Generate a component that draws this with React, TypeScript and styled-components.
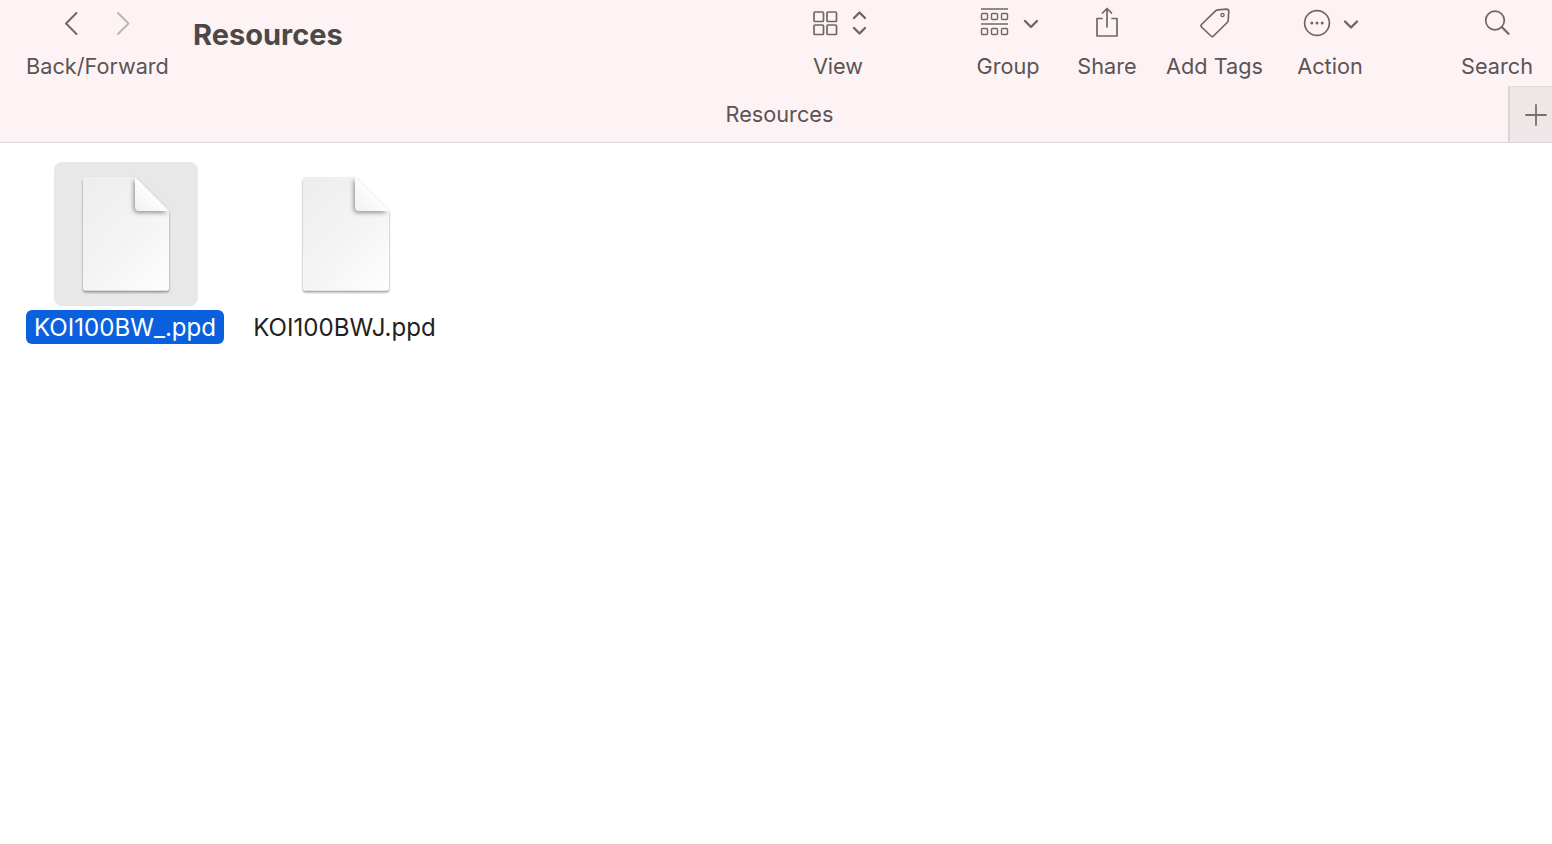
import React from 'react';
import styled, { createGlobalStyle } from 'styled-components';

const GlobalStyle = createGlobalStyle`
  html, body {
    margin: 0;
    padding: 0;
    background: #fff;
    font-family: Inter, "Liberation Sans", sans-serif;
  }
`;

const Page = styled.div`
  width: 1552px;
  height: 844px;
  overflow: hidden;
  display: flex;
  flex-direction: column;
`;

const Header = styled.header`
  height: 142px;
  background: #fdf3f4;
  border-bottom: 1px solid #dad8d8;
  display: flex;
  flex-direction: column;
`;

const Toolbar = styled.div`
  height: 86px;
  display: flex;
  align-items: flex-start;
  padding: 0 19px 0 26px;
`;

const ToolItem = styled.div<{ $width: number; $gap?: number }>`
  width: ${(p) => p.$width}px;
  margin-left: ${(p) => p.$gap ?? 0}px;
  display: flex;
  flex-direction: column;
  align-items: center;
  flex: none;
`;

const IconRow = styled.div`
  height: 46px;
  display: flex;
  align-items: center;
  justify-content: center;
  color: #6f6767;
`;

const ToolLabel = styled.span`
  font-size: 21.7px;
  line-height: 40px;
  color: #5b5454;
  white-space: nowrap;
`;

const Title = styled.h1`
  margin: 13px 0 0 24px;
  font-size: 29px;
  line-height: 44px;
  font-weight: 700;
  color: #4d4848;
  flex: 1;
`;

const TabBar = styled.div`
  flex: 1;
  display: flex;
`;

const TabTitle = styled.div`
  flex: 1;
  padding-left: 51px;
  display: flex;
  align-items: center;
  justify-content: center;
  font-size: 21.7px;
  color: #5b5454;
`;

const AddTab = styled.div`
  width: 44px;
  padding-left: 9px;
  box-sizing: border-box;
  background: #efe7e7;
  border-left: 2px solid #dcd6d6;
  border-top: 1px solid #e2dcdc;
  display: flex;
  align-items: center;
  justify-content: center;
  color: #767070;
`;

const Files = styled.main`
  display: flex;
  align-items: flex-start;
  padding: 19px 0 0 26px;
`;

const FileCell = styled.div<{ $width: number; $gap?: number }>`
  width: ${(p) => p.$width}px;
  margin-left: ${(p) => p.$gap ?? 0}px;
  display: flex;
  flex-direction: column;
  align-items: center;
`;

const Tile = styled.div<{ $selected?: boolean }>`
  width: 144px;
  height: 144px;
  margin-left: 2px;
  border-radius: 8px;
  background: ${(p) => (p.$selected ? '#e8e8e8' : 'transparent')};
  display: flex;
  align-items: center;
  justify-content: center;
`;

const FileName = styled.span<{ $selected?: boolean }>`
  margin-top: 4px;
  height: 34px;
  padding: 0 8px;
  border-radius: 6px;
  font-size: 24.1px;
  line-height: 36px;
  white-space: nowrap;
  color: ${(p) => (p.$selected ? '#fff' : '#222')};
  background: ${(p) => (p.$selected ? '#0b60dd' : 'transparent')};
`;

const stroke = {
  fill: 'none',
  stroke: 'currentColor',
  strokeWidth: 1.7,
  strokeLinecap: 'round' as const,
  strokeLinejoin: 'round' as const,
};

const BackForwardIcon = () => (
  <svg width="80" height="30" viewBox="0 0 80 30">
    <path d="M18.5 5 L8 15.5 L18.5 26" {...stroke} strokeWidth={2} color="#6f6767" />
    <path d="M60 5 L70.5 15.5 L60 26" {...stroke} strokeWidth={2} color="#bdb6b6" />
  </svg>
);

const ViewIcon = () => (
  <svg width="56" height="30" viewBox="-3 0 56 30">
    <rect x="1" y="4" width="9.5" height="9.5" rx="1" {...stroke} />
    <rect x="14" y="4" width="9.5" height="9.5" rx="1" {...stroke} />
    <rect x="1" y="17" width="9.5" height="9.5" rx="1" {...stroke} />
    <rect x="14" y="17" width="9.5" height="9.5" rx="1" {...stroke} />
    <path d="M41 10 L46.5 4.5 L52 10 M41 20 L46.5 25.5 L52 20" {...stroke} strokeWidth={2.4} />
  </svg>
);

const GroupIcon = () => (
  <svg width="60" height="32" viewBox="-2 0 60 32">
    <path d="M1 2 H28 M1 17 H28" {...stroke} strokeLinecap="butt" />
    <rect x="1.5" y="6.5" width="6" height="6" rx="1" {...stroke} strokeWidth={1.4} />
    <rect x="11.5" y="6.5" width="6" height="6" rx="1" {...stroke} strokeWidth={1.4} />
    <rect x="21.5" y="6.5" width="6" height="6" rx="1" {...stroke} strokeWidth={1.4} />
    <rect x="1.5" y="21.5" width="6" height="6" rx="1" {...stroke} strokeWidth={1.4} />
    <rect x="11.5" y="21.5" width="6" height="6" rx="1" {...stroke} strokeWidth={1.4} />
    <rect x="21.5" y="21.5" width="6" height="6" rx="1" {...stroke} strokeWidth={1.4} />
    <path d="M45 14 L51 20 L57 14" {...stroke} strokeWidth={2.4} />
  </svg>
);

const ShareIcon = () => (
  <svg width="26" height="32" viewBox="0 0 26 32">
    <path d="M8 11.5 H3 V29 H23 V11.5 H18" {...stroke} />
    <path d="M13 20 V2 M8.5 6 L13 1.5 L17.5 6" {...stroke} />
  </svg>
);

const TagIcon = () => (
  <svg width="30" height="30" viewBox="0 0 30 30">
    <path d="M1.5 16.5 L15.5 2.8 Q16.5 1.8 18 1.8 L26.5 1.2 Q28.8 1.2 28.8 3.5 L28.2 12 Q28.2 13.5 27.2 14.5 L13.5 28 Q12.3 29.2 11 28 L1.5 19 Q0.5 17.8 1.5 16.5 Z" {...stroke} />
    <circle cx="22.5" cy="7" r="1.6" {...stroke} strokeWidth={1.4} />
  </svg>
);

const ActionIcon = () => (
  <svg width="62" height="30" viewBox="-4 0 62 30">
    <circle cx="14" cy="15" r="12.4" {...stroke} />
    <circle cx="8.8" cy="15" r="1.5" fill="currentColor" />
    <circle cx="14" cy="15" r="1.5" fill="currentColor" />
    <circle cx="19.2" cy="15" r="1.5" fill="currentColor" />
    <path d="M42 13.5 L48 19.5 L54 13.5" {...stroke} strokeWidth={2.4} />
  </svg>
);

const SearchIcon = () => (
  <svg width="28" height="28" viewBox="0 0 28 28">
    <circle cx="12" cy="11.5" r="9.3" {...stroke} />
    <path d="M18.8 18 L25.5 24.8" {...stroke} strokeWidth={2.2} />
  </svg>
);

const PlusIcon = () => (
  <svg width="22" height="22" viewBox="0 0 22 22">
    <path d="M11 1 V21 M1 11 H21" {...stroke} strokeWidth={1.8} />
  </svg>
);

const DocumentIcon = ({ id }: { id: string }) => (
  <svg width="96" height="126" viewBox="0 0 96 126">
    <defs>
      <linearGradient id={`${id}-page`} x1="0.1" y1="0" x2="0.9" y2="1">
        <stop offset="0" stopColor="#eeeeee" />
        <stop offset="0.55" stopColor="#f4f4f4" />
        <stop offset="1" stopColor="#fdfdfd" />
      </linearGradient>
      <linearGradient id={`${id}-fold`} x1="0" y1="1" x2="1" y2="0">
        <stop offset="0" stopColor="#f0f0f0" />
        <stop offset="0.45" stopColor="#fcfcfc" />
        <stop offset="1" stopColor="#ffffff" />
      </linearGradient>
      <filter id={`${id}-shadow`} x="-10%" y="-10%" width="120%" height="120%">
        <feDropShadow dx="0" dy="1.8" stdDeviation="1" floodColor="#000" floodOpacity="0.42" />
      </filter>
      <filter id={`${id}-foldshadow`} x="-30%" y="-30%" width="160%" height="160%">
        <feDropShadow dx="-1.5" dy="2" stdDeviation="2" floodColor="#000" floodOpacity="0.38" />
      </filter>
    </defs>
    <path
      d="M7.5 6 H57 L91 40 V117 Q91 119.5 88.5 119.5 H7.5 Q5 119.5 5 117 V8.5 Q5 6 7.5 6 Z"
      fill={`url(#${id}-page)`}
      filter={`url(#${id}-shadow)`}
    />
    <path
      d="M57 6 L91 40 H62 Q57 40 57 35 Z"
      fill={`url(#${id}-fold)`}
      filter={`url(#${id}-foldshadow)`}
    />
  </svg>
);

const tools = [
  { label: 'View', width: 50, gap: 0, icon: <ViewIcon /> },
  { label: 'Group', width: 64, gap: 113, icon: <GroupIcon /> },
  { label: 'Share', width: 60, gap: 37, icon: <ShareIcon /> },
  { label: 'Add Tags', width: 97, gap: 29, icon: <TagIcon /> },
  { label: 'Action', width: 66, gap: 34, icon: <ActionIcon /> },
  { label: 'Search', width: 72, gap: 98, icon: <SearchIcon /> },
];

const files = [
  { name: 'KOI100BW_.ppd', selected: true, width: 198, gap: 0 },
  { name: 'KOI100BWJ.ppd', selected: false, width: 197, gap: 22 },
];

export default function App() {
  return (
    <Page>
      <GlobalStyle />
      <Header>
        <Toolbar>
          <ToolItem $width={143}>
            <IconRow>
              <BackForwardIcon />
            </IconRow>
            <ToolLabel>Back/Forward</ToolLabel>
          </ToolItem>
          <Title>Resources</Title>
          {tools.map((t) => (
            <ToolItem key={t.label} $width={t.width} $gap={t.gap}>
              <IconRow>{t.icon}</IconRow>
              <ToolLabel>{t.label}</ToolLabel>
            </ToolItem>
          ))}
        </Toolbar>
        <TabBar>
          <TabTitle>Resources</TabTitle>
          <AddTab>
            <PlusIcon />
          </AddTab>
        </TabBar>
      </Header>
      <Files>
        {files.map((f, i) => (
          <FileCell key={f.name} $width={f.width} $gap={f.gap}>
            <Tile $selected={f.selected}>
              <DocumentIcon id={`doc${i}`} />
            </Tile>
            <FileName $selected={f.selected}>{f.name}</FileName>
          </FileCell>
        ))}
      </Files>
    </Page>
  );
}
